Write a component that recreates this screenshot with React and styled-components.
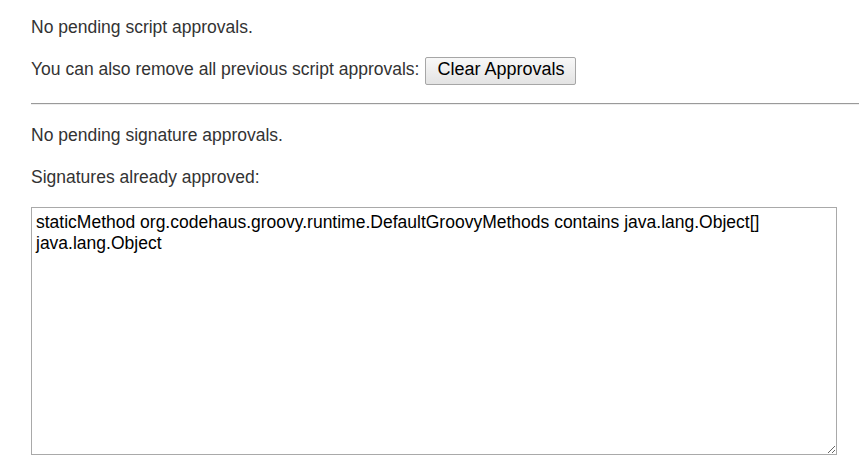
import styled, { createGlobalStyle } from "styled-components";

const GlobalStyle = createGlobalStyle`
  body {
    margin: 0;
    background: #fff;
    font-family: "Liberation Sans", Arial, sans-serif;
    font-size: 17.5px;
    color: #333;
  }
`;

const Page = styled.div`
  padding: 15px 0 0 31px;
`;

const Text = styled.p`
  margin: 0 0 ${(p) => p.$gap ?? 17.5}px 0;
  line-height: 24px;
`;

const Divider = styled.hr`
  margin: 18.5px 0 18px 0;
  border: none;
  border-top: 1px solid #9a9a9a;
  border-bottom: 1px solid #eeeeee;
  height: 0;
`;

const Button = styled.button`
  font-family: "Liberation Sans", Arial, sans-serif;
  font-size: 18px;
  color: #000;
  height: 28px;
  padding: 0 10px 3px 11px;
  margin-left: 6px;
  border: 1px solid #a6a6a6;
  border-radius: 2px;
  background: linear-gradient(#f8f8f8, #e3e3e3);
  line-height: normal;
  vertical-align: baseline;
  box-sizing: border-box;
  cursor: pointer;
`;

const Approved = styled.textarea`
  display: block;
  box-sizing: border-box;
  width: 806px;
  height: 248px;
  margin: 0;
  padding: 4px 4px;
  border: 1px solid #a9a9a9;
  font-family: "Liberation Sans", Arial, sans-serif;
  font-size: 17.5px;
  line-height: 21px;
  color: #000;
  outline: none;
`;

const signatures =
  "staticMethod org.codehaus.groovy.runtime.DefaultGroovyMethods contains java.lang.Object[] java.lang.Object";

const App = () => {
  return (
    <Page>
      <GlobalStyle />
      <Text>No pending script approvals.</Text>
      <Text $gap={0}>
        You can also remove all previous script approvals:
        <Button>Clear Approvals</Button>
      </Text>
      <Divider />
      <Text>No pending signature approvals.</Text>
      <Text $gap={18}>Signatures already approved:</Text>
      <Approved readOnly defaultValue={signatures} />
    </Page>
  );
};

export default App;
